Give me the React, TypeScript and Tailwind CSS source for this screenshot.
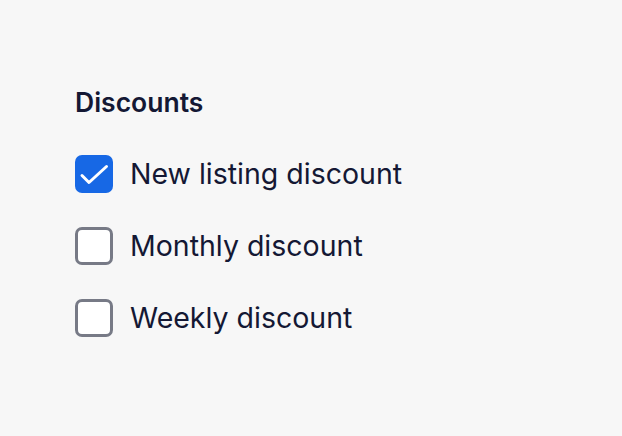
import { useState } from "react";

const options = [
  { id: "new", label: "New listing discount", checked: true },
  { id: "monthly", label: "Monthly discount", checked: false },
  { id: "weekly", label: "Weekly discount", checked: false },
];

export default function App() {
  const [values, setValues] = useState(options);

  const toggle = (id: string) => {
    setValues(values.map((o) => (o.id === id ? { ...o, checked: !o.checked } : o)));
  };

  return (
    <div
      className="w-[622px] h-[436px] bg-[#f7f7f7] text-[#141834] pl-[75px] pt-[84px]"
      style={{ fontFamily: "Inter, 'Noto Sans', sans-serif" }}
    >
      <h2 className="text-[26.5px] font-semibold leading-[36px]">Discounts</h2>
      <div className="flex flex-col gap-[34px] mt-[35px]">
        {values.map((o) => (
          <label key={o.id} className="flex items-center gap-[17px] cursor-pointer">
            <button
              type="button"
              onClick={() => toggle(o.id)}
              className={
                o.checked
                  ? "w-[38px] h-[38px] rounded-[7px] bg-[#1768e5] shrink-0"
                  : "w-[38px] h-[38px] rounded-[7px] border-[3px] border-[#777a86] bg-white shrink-0"
              }
            >
              {o.checked && (
                <svg width="38" height="38" viewBox="0 0 38 38" fill="none">
                  <path
                    d="M7 20.5l7 7L31.5 11.5"
                    stroke="white"
                    strokeWidth="3"
                    strokeLinecap="round"
                    strokeLinejoin="round"
                  />
                </svg>
              )}
            </button>
            <span className="text-[28.5px] leading-[38px]">{o.label}</span>
          </label>
        ))}
      </div>
    </div>
  );
}
